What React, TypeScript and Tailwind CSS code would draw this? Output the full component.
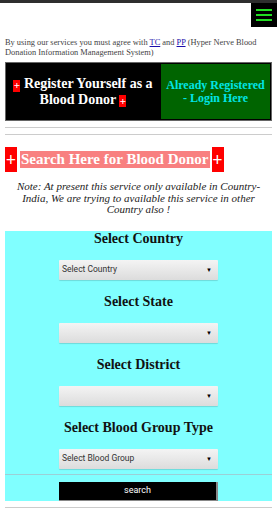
import { ReactNode } from 'react';

function Plus({ className }: { className: string }) {
  return (
    <span className={`inline-flex items-center justify-center bg-[#ff0000] text-white ${className}`}>+</span>
  );
}

function FakeSelect({ label }: { label: string }) {
  return (
    <div className="mx-auto flex h-[20px] w-[159px] items-center justify-between rounded-[1px] bg-gradient-to-b from-[#f4f4f4] to-[#dcdcdc] px-[3px] font-['Roboto',sans-serif] text-[8.5px] text-[#333] shadow-[0_1px_1px_rgba(0,0,0,0.15)]">
      <span>{label}</span>
      <span className="mr-[3px] text-[6px] text-black">▼</span>
    </div>
  );
}

function Field({ title, children }: { title: string; children: ReactNode }) {
  return (
    <div>
      <h3 className="h-[16px] text-center text-[14px] leading-[16px] font-bold text-[#111]">{title}</h3>
      <div className="mt-[13px]">{children}</div>
    </div>
  );
}

function App() {
  return (
    <main className="min-h-[512px] bg-white font-['Liberation_Serif',serif] text-[#333]">
      <header className="flex justify-end border-t-[3px] border-[#2e2e2e]">
        <button className="flex h-[24px] w-[26px] flex-col items-center justify-center gap-[3px] bg-black">
          <span className="h-[2px] w-[16px] bg-[#22dd22]" />
          <span className="h-[2px] w-[16px] bg-[#22dd22]" />
          <span className="h-[2px] w-[16px] bg-[#22dd22]" />
        </button>
      </header>

      <p className="mt-[11px] px-[5px] text-[8.4px] leading-[9.5px] text-[#444]">
        By using our services you must agree with{' '}
        <a href="#" className="text-[#1a0dab] underline">TC</a> and{' '}
        <a href="#" className="text-[#1a0dab] underline">PP</a> (Hyper Nerve Blood Donation
        Information Management System)
      </p>

      <div className="mx-[5px] mt-[5px] flex h-[59px] border border-[#666] bg-black">
        <div className="flex flex-1 items-center justify-center text-center text-[14px] leading-[15px] font-bold text-white">
          <p>
            <Plus className="h-[12px] w-[7px] align-[-1px] text-[11px] leading-none" /> Register Yourself as a Blood
            Donor <Plus className="h-[12px] w-[7px] align-[-1px] text-[11px] leading-none" />
          </p>
        </div>
        <div className="flex w-[111px] items-center justify-center border border-black bg-[#006400] text-center text-[12px] leading-[13px] font-bold text-[#00e5e5]">
          <p>
            Already Registered
            <br />- Login Here
          </p>
        </div>
      </div>

      <div className="mx-[5px] mt-[6px] border-t border-[#ccc]" />
      <div className="mx-[5px] mt-[6px] border-t border-[#ccc]" />

      <div className="mt-[12px] flex items-center px-[5px]">
        <Plus className="h-[25px] w-[12px] text-[18px] font-bold leading-none" />
        <span className="ml-[3px] bg-[#f88080] px-[1px] text-[15px] leading-[17px] font-bold text-white">
          Search Here for Blood Donor
        </span>
        <Plus className="ml-[2px] h-[25px] w-[12px] text-[18px] font-bold leading-none" />
      </div>

      <p className="mt-[9px] px-[14px] text-center text-[11px] leading-[11.5px] italic text-[#222]">
        Note: At present this service only available in Country-India, We are trying to available this
        service in other Country also !
      </p>

      <section className="mx-[5px] mt-[15px] flex flex-col gap-[14px] bg-[#80ffff]">
        <Field title="Select Country">
          <FakeSelect label="Select Country" />
        </Field>
        <Field title="Select State">
          <FakeSelect label="" />
        </Field>
        <Field title="Select District">
          <FakeSelect label="" />
        </Field>
        <div>
          <Field title="Select Blood Group Type">
            <FakeSelect label="Select Blood Group" />
          </Field>
          <div className="mt-[5px] border-t border-[#9ccfd6]" />
          <button className="mx-auto mt-[7px] flex h-[19px] w-[159px] items-center justify-center border-r-2 border-b border-[#888] bg-black font-['Roboto',sans-serif] text-[9px] text-white">
            search
          </button>
        </div>
      </section>

      <div className="mx-[5px] mt-[6px] border-t border-[#ccc]" />
    </main>
  );
}

export default App;
